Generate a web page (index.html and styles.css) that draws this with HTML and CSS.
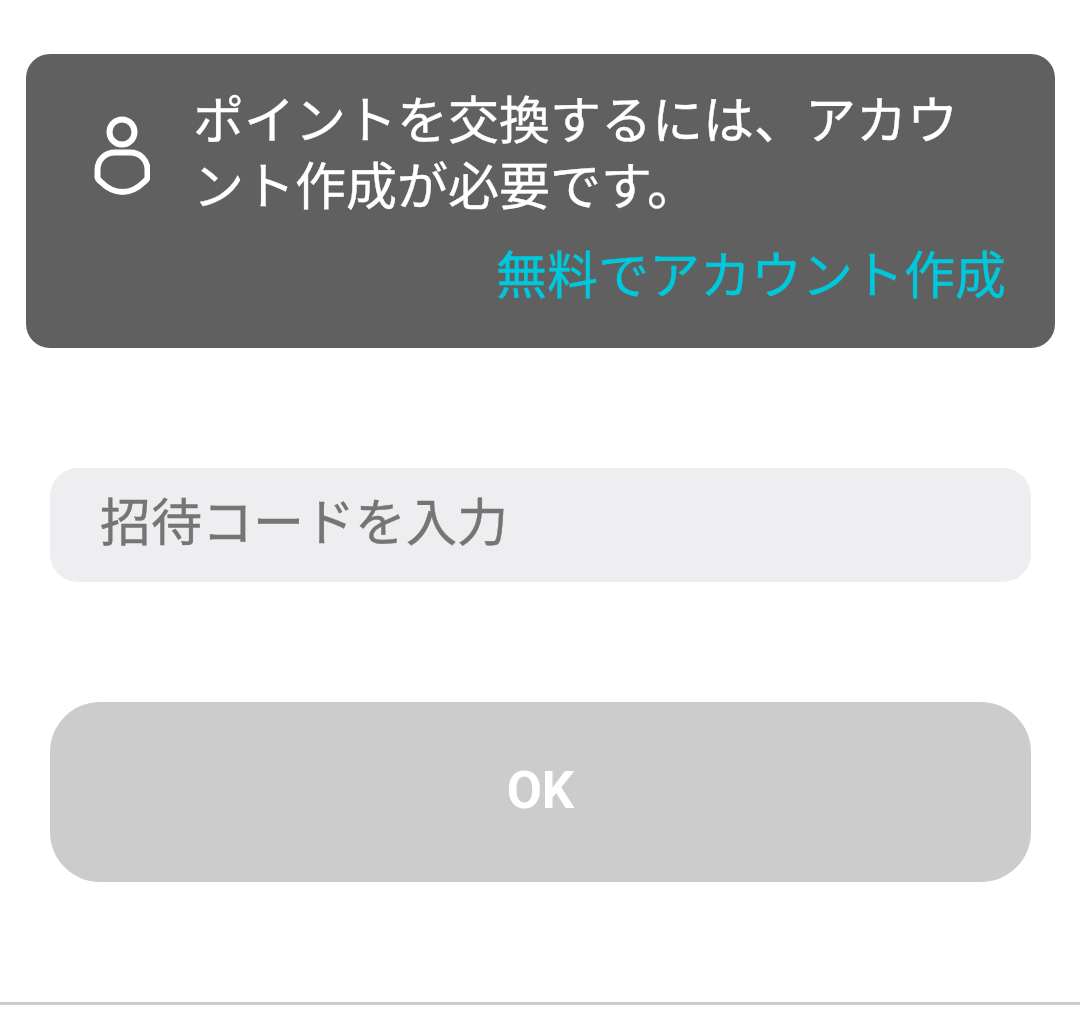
FILE: index.html
```html
<!DOCTYPE html>
<html lang="ja">
<head>
<meta charset="utf-8">
<title>招待コード</title>
<link rel="stylesheet" href="styles.css">
</head>
<body>
<main class="page">
  <section class="notice">
    <div class="notice-main">
      <svg class="notice-icon" viewBox="0 0 56 84" width="56" height="84" aria-hidden="true">
        <circle cx="28" cy="20" r="12.5" fill="none" stroke="#fff" stroke-width="6"/>
        <path d="M3.5 65 V58 C3.5 48 11 40.5 21 40.5 H36 C46 40.5 53.5 48 53.5 58 V65 C53.5 67 52.5 68 50 70 C44 76 36 80 28.5 80 C21 80 13 76 7 70 C4.5 68 3.5 67 3.5 65 Z" fill="none" stroke="#fff" stroke-width="6" stroke-linejoin="round"/>
      </svg>
      <p class="notice-text">ポイントを交換するには、アカウント作成が必要です。</p>
    </div>
    <a class="notice-link">無料でアカウント作成</a>
  </section>
  <div class="code-field">招待コードを入力</div>
  <div class="ok-button">OK</div>
  <hr class="rule">
</main>
</body>
</html>
```
FILE: styles.css
```css
* { box-sizing: border-box; }
html, body { margin: 0; padding: 0; background: #fff; }
body { font-family: "Roboto", "Noto Sans CJK JP", sans-serif; }
.page { width: 1080px; height: 1025px; padding-top: 54px; display: flex; flex-direction: column; overflow: hidden; }
.notice { width: 1029px; height: 294px; margin-left: 26px; background: #606060; border-radius: 24px; padding: 35px 49px 0 60px; color: #fff; display: flex; flex-direction: column; }
.notice-main { display: flex; align-items: center; gap: 43px; }
.notice-icon { width: 56px; height: 84px; flex: none; margin: 0 0 2px 8px; filter: blur(0.5px); }
.notice-text { margin: 0; font-size: 51px; line-height: 66px; width: 780px; -webkit-text-stroke: 0.4px #fff; }
.notice-link { align-self: flex-end; margin-top: 23px; font-size: 51px; line-height: 66px; color: #00c8dc; -webkit-text-stroke: 0.4px #00c8dc; }
.code-field { margin: 120px 0 0 50px; width: 981px; height: 114px; background: #eeeef0; border-radius: 28px; padding-left: 50px; font-size: 51px; line-height: 112px; color: #757575; -webkit-text-stroke: 0.4px #757575; }
.ok-button { margin: 120px 0 0 50px; width: 981px; height: 180px; background: #cccccc; border-radius: 50px; color: #fff; font-size: 51px; font-weight: 700; text-align: center; line-height: 178px; }
.rule { margin: 120px 0 0; border: 0; height: 3px; background: #cccccc; }
```
